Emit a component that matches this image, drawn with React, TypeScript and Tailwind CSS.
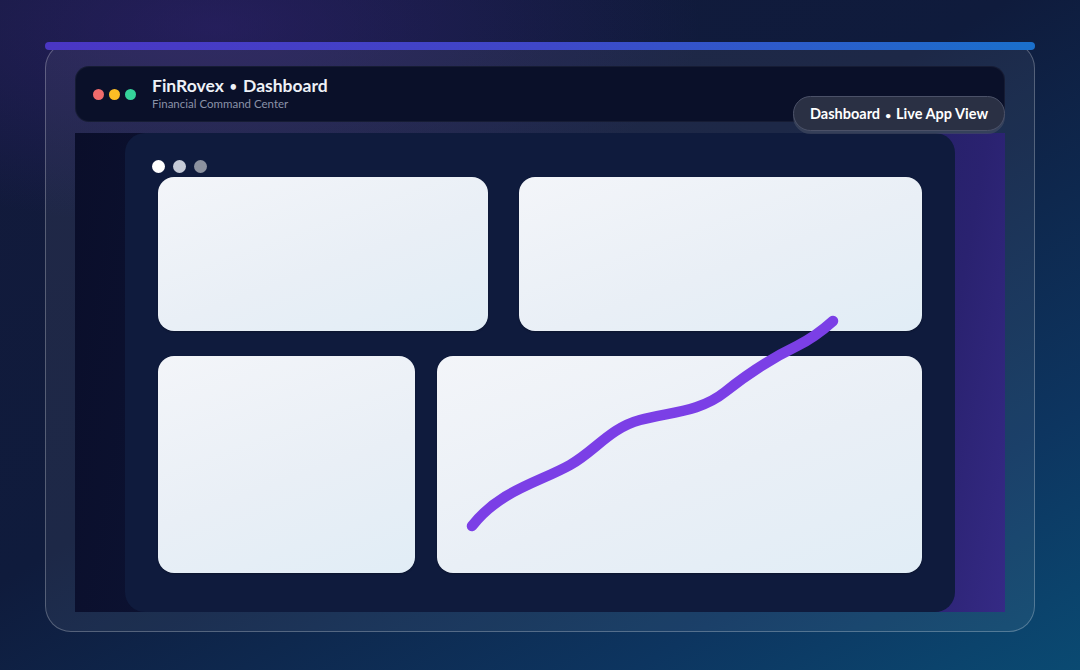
import React from "react";

/** FinRovex — dashboard preview mock (framed window, skeleton cards, trend line). */

const font = { fontFamily: "Lato, 'Noto Sans', sans-serif" };

function Card({ className = "" }: { className?: string }) {
  return (
    <div
      className={`rounded-[16px] bg-[linear-gradient(160deg,#f3f5f9_0%,#e9eff6_55%,#e1edf6_100%)] shadow-[0_1px_2px_rgba(0,0,0,0.25)] ${className}`}
    />
  );
}

function Dot() {
  return <span className="mx-[0.15em] inline-block align-middle text-[0.7em] leading-none">•</span>;
}

function TrendLine() {
  return (
    <svg className="pointer-events-none absolute left-0 top-0" width="1080" height="670" viewBox="0 0 1080 670">
      <path
        d="M472 526 C 500 490, 540 482, 570 465 C 595 451, 610 428, 640 420 C 670 412, 700 412, 725 392 C 750 372, 772 358, 797 346 C 811 339, 823 330, 833 321"
        fill="none"
        stroke="#7b3fe6"
        strokeWidth="10.5"
        strokeLinecap="round"
        strokeLinejoin="round"
      />
    </svg>
  );
}

export default function App() {
  return (
    <div
      style={font}
      className="relative h-[670px] w-[1080px] overflow-hidden bg-[radial-gradient(ellipse_45%_30%_at_20%_4%,rgba(60,35,130,0.45)_0%,transparent_100%),linear-gradient(150deg,#131a3b_0%,#0f1b3c_45%,#0d3560_80%,#0a4a72_100%)] pt-[38px]"
    >
      <div className="relative mx-[45px] h-[594px]">
        {/* top accent bar */}
        <div className="absolute left-0 right-0 top-0 z-10 h-[8px] rounded-full bg-[linear-gradient(90deg,#4a36c4_0%,#3f47c8_50%,#1a70cc_100%)]" />

        <div className="mt-[4px] flex h-[590px] flex-col rounded-[26px] border border-white/25 bg-white/[0.06] px-[29px] pb-[19px] pt-[23px]">
          {/* header */}
          <header className="flex h-[56px] shrink-0 items-center gap-[12px] rounded-[14px] border border-white/5 bg-[#0a1029] pl-[17px]">
            <div className="flex items-center gap-[5px]">
              <span className="h-[11px] w-[11px] rounded-full bg-[#f06b6b]" />
              <span className="h-[11px] w-[11px] rounded-full bg-[#fbbd25]" />
              <span className="h-[11px] w-[11px] rounded-full bg-[#35d39a]" />
            </div>
            <div className="ml-[4px] flex flex-col">
              <h1 className="text-[17.5px] font-bold leading-[20px] text-[#eef1f7]">
                FinRovex <Dot /> Dashboard
              </h1>
              <p className="text-[11.5px] leading-[16px] text-[#8a92a8]">Financial Command Center</p>
            </div>
          </header>

          {/* app area */}
          <div className="mt-[11px] flex flex-1 bg-[linear-gradient(100deg,#0a0e2a_0%,#101a40_50%,#2a2270_90%,#352a85_100%)]">
            <div className="ml-[50px] flex w-[830px] flex-col rounded-[20px] bg-[#0f1b3d] px-[33px] pb-[39px] pt-[27px]">
              <div className="-ml-[6px] flex items-center gap-[8px]">
                <span className="h-[13px] w-[13px] rounded-full bg-white" />
                <span className="h-[13px] w-[13px] rounded-full bg-[#c6cbd8]" />
                <span className="h-[13px] w-[13px] rounded-full bg-[#8c929f]" />
              </div>
              <div className="mt-[4px] flex h-[154px] gap-[31px]">
                <Card className="w-[330px]" />
                <Card className="flex-1" />
              </div>
              <div className="mt-[25px] flex flex-1 gap-[22px]">
                <Card className="w-[257px]" />
                <Card className="flex-1" />
              </div>
            </div>
          </div>
        </div>
      </div>

      {/* floating badge */}
      <div className="absolute left-[793px] top-[96px] flex h-[35px] w-[212px] items-center justify-center rounded-full border border-[#4b5168] bg-[#2a3044] text-[14.5px] font-bold text-white shadow-[0_3px_0_rgba(70,78,100,0.6)]">
        <span>
          Dashboard <Dot /> Live App View
        </span>
      </div>

      <TrendLine />
    </div>
  );
}
